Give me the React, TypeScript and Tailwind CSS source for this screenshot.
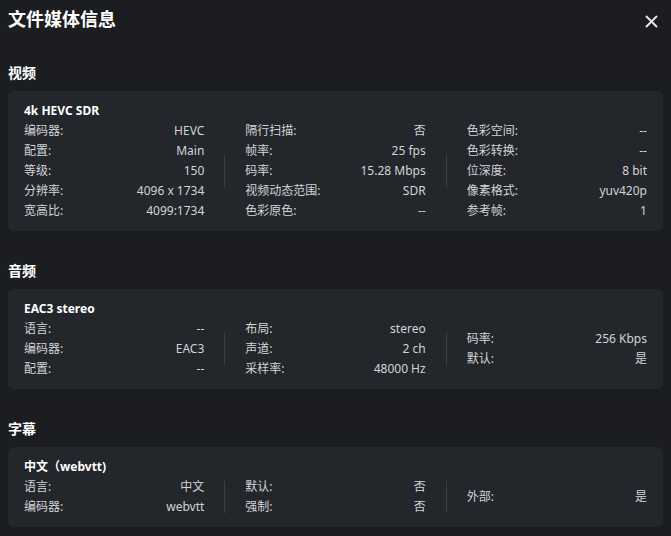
import React from 'react';

type Row = [string, string];

const video: Row[][] = [
  [
    ['编码器:', 'HEVC'],
    ['配置:', 'Main'],
    ['等级:', '150'],
    ['分辨率:', '4096 x 1734'],
    ['宽高比:', '4099:1734'],
  ],
  [
    ['隔行扫描:', '否'],
    ['帧率:', '25 fps'],
    ['码率:', '15.28 Mbps'],
    ['视频动态范围:', 'SDR'],
    ['色彩原色:', '--'],
  ],
  [
    ['色彩空间:', '--'],
    ['色彩转换:', '--'],
    ['位深度:', '8 bit'],
    ['像素格式:', 'yuv420p'],
    ['参考帧:', '1'],
  ],
];

const audio: Row[][] = [
  [
    ['语言:', '--'],
    ['编码器:', 'EAC3'],
    ['配置:', '--'],
  ],
  [
    ['布局:', 'stereo'],
    ['声道:', '2 ch'],
    ['采样率:', '48000 Hz'],
  ],
  [
    ['码率:', '256 Kbps'],
    ['默认:', '是'],
  ],
];

const subtitle: Row[][] = [
  [
    ['语言:', '中文'],
    ['编码器:', 'webvtt'],
  ],
  [
    ['默认:', '否'],
    ['强制:', '否'],
  ],
  [['外部:', '是']],
];

function StreamCard({ title, columns }: { title: string; columns: Row[][] }) {
  return (
    <div className="bg-[#23262b] rounded-md px-4 py-2.5">
      <div className="text-xs font-bold text-white leading-5">{title}</div>
      <div className="flex">
        {columns.map((col, i) => (
          <React.Fragment key={i}>
            {i > 0 && <div className="w-px h-8 bg-[#3b4046] mx-5 self-center shrink-0" />}
            <div className="flex-1 flex flex-col justify-center">
              {col.map(([label, value]) => (
                <div key={label} className="flex justify-between text-xs leading-5 text-[#d2d4d7]">
                  <span>{label}</span>
                  <span>{value}</span>
                </div>
              ))}
            </div>
          </React.Fragment>
        ))}
      </div>
    </div>
  );
}

function Section({ title, children }: { title: string; children: React.ReactNode }) {
  return (
    <div className="mt-[30px]">
      <h3 className="text-sm font-bold text-white leading-5 mb-2">{title}</h3>
      {children}
    </div>
  );
}

export default function App() {
  return (
    <div
      className="min-h-screen bg-[#1b1d21] px-2 pt-[7px] pb-3"
      style={{ fontFamily: '"Noto Sans", "Noto Sans CJK SC", sans-serif' }}
    >
      <div className="flex items-start justify-between">
        <h2 className="text-lg font-bold text-white leading-6">文件媒体信息</h2>
        <button className="w-6 h-6 mt-[2px] flex items-center justify-center text-[#e3e4e6]">
          <svg width="13" height="13" viewBox="0 0 13 13" fill="none" stroke="currentColor" strokeWidth="2" strokeLinecap="round">
            <path d="M1.5 1.5l10 10M11.5 1.5l-10 10" />
          </svg>
        </button>
      </div>

      <Section title="视频">
        <StreamCard title="4k HEVC SDR" columns={video} />
      </Section>
      <Section title="音频">
        <StreamCard title="EAC3 stereo" columns={audio} />
      </Section>
      <Section title="字幕">
        <StreamCard title="中文（webvtt)" columns={subtitle} />
      </Section>
    </div>
  );
}
